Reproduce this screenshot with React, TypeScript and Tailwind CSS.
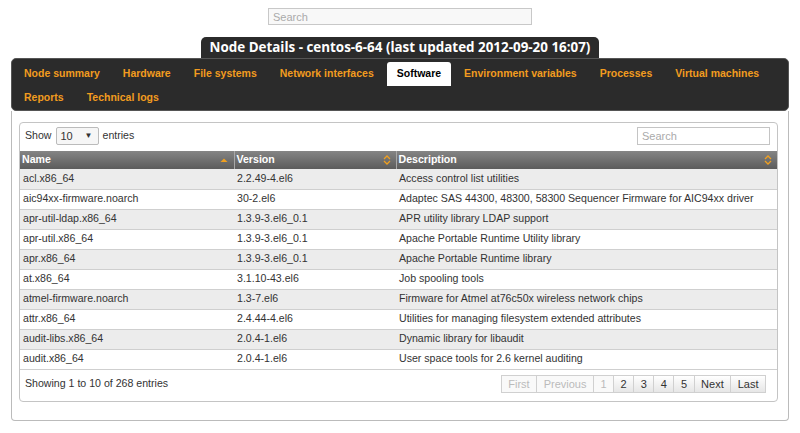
import React from 'react';

type Pkg = {
  name: string;
  version: string;
  description: string;
};

const TABS_ROW_1 = [
  'Node summary',
  'Hardware',
  'File systems',
  'Network interfaces',
  'Software',
  'Environment variables',
  'Processes',
  'Virtual machines',
];

const TABS_ROW_2 = ['Reports', 'Technical logs'];

const PACKAGES: Pkg[] = [
  { name: 'acl.x86_64', version: '2.2.49-4.el6', description: 'Access control list utilities' },
  { name: 'aic94xx-firmware.noarch', version: '30-2.el6', description: 'Adaptec SAS 44300, 48300, 58300 Sequencer Firmware for AIC94xx driver' },
  { name: 'apr-util-ldap.x86_64', version: '1.3.9-3.el6_0.1', description: 'APR utility library LDAP support' },
  { name: 'apr-util.x86_64', version: '1.3.9-3.el6_0.1', description: 'Apache Portable Runtime Utility library' },
  { name: 'apr.x86_64', version: '1.3.9-3.el6_0.1', description: 'Apache Portable Runtime library' },
  { name: 'at.x86_64', version: '3.1.10-43.el6', description: 'Job spooling tools' },
  { name: 'atmel-firmware.noarch', version: '1.3-7.el6', description: 'Firmware for Atmel at76c50x wireless network chips' },
  { name: 'attr.x86_64', version: '2.4.44-4.el6', description: 'Utilities for managing filesystem extended attributes' },
  { name: 'audit-libs.x86_64', version: '2.0.4-1.el6', description: 'Dynamic library for libaudit' },
  { name: 'audit.x86_64', version: '2.0.4-1.el6', description: 'User space tools for 2.6 kernel auditing' },
];

const SortBoth: React.FC = () => (
  <svg width="8" height="10" viewBox="0 0 8 10" className="shrink-0">
    <path d="M1 4 L4 1 L7 4" fill="none" stroke="#f0a020" strokeWidth="1.3" />
    <path d="M1 6 L4 9 L7 6" fill="none" stroke="#f0a020" strokeWidth="1.3" />
  </svg>
);

const SortAsc: React.FC = () => (
  <svg width="8" height="6" viewBox="0 0 8 6" className="shrink-0">
    <path d="M0.5 5 L4 1.5 L7.5 5 Z" fill="#f0a020" />
  </svg>
);

const Tab: React.FC<{ label: string; active?: boolean }> = ({ label, active }) => (
  <li
    className={`flex h-6 items-center rounded-t-[3px] px-[10px] text-[10.5px] font-bold ${
      active ? 'bg-white text-black' : 'text-[#f29c1f]'
    }`}
  >
    {label}
  </li>
);

const PageButton: React.FC<{ label: string; disabled?: boolean }> = ({ label, disabled }) => (
  <span
    className={`flex h-[18px] items-center border-y border-r border-[#d0d0d0] px-[6.5px] text-[11px] first:border-l ${
      disabled
        ? 'bg-[#f9f9f9] text-[#bbbbbb]'
        : 'bg-gradient-to-b from-white to-[#e6e6e6] text-[#333333]'
    }`}
  >
    {label}
  </span>
);

export default function App() {
  return (
    <div className="h-[433px] w-[800px] bg-white font-['Liberation_Sans',Arial,sans-serif] text-[#333333]">
      <div className="flex justify-center pt-2">
        <input
          type="text"
          placeholder="Search"
          className="h-[17px] w-[264px] border border-[#c8c8c8] bg-[#f8f8f8] px-1 text-[11px] placeholder:text-[#aaaaaa] focus:outline-none"
        />
      </div>

      <div className="mt-[12px] flex justify-center">
        <h1 className="rounded-t-[5px] bg-[#2b2b2b] px-[9px] pt-[1px] pb-[1px] font-['Open_Sans',sans-serif] text-[13.4px] leading-[19px] font-bold text-white">
          Node Details - centos-6-64 (last updated 2012-09-20 16:07)
        </h1>
      </div>

      <div className="mx-[11px]">
        <ul className="flex flex-wrap gap-x-[3px] rounded-[5px] border border-[#555555] bg-[#2b2b2b] px-[2px] pt-[3px]">
          {TABS_ROW_1.map((t) => (
            <Tab key={t} label={t} active={t === 'Software'} />
          ))}
          <li className="basis-full" />
          {TABS_ROW_2.map((t) => (
            <Tab key={t} label={t} />
          ))}
        </ul>

        <div className="h-[310px] rounded-b-[4px] border-x border-b border-[#bbbbbb] pt-[11px] pr-[10px] pl-[7px]">
          <div className="rounded-[4px] border border-[#c4c4c4] text-[10.6px]">
            <div className="flex h-[28px] items-center justify-between pr-[7px] pl-[5px] pb-[2px]">
              <div className="flex items-center gap-1">
                <span>Show</span>
                <span className="flex h-[18px] w-[43px] items-center justify-between rounded-[2px] border border-[#bbbbbb] bg-[#f6f6f6] pr-[5px] pl-[4px] text-[11px]">
                  10
                  <span className="text-[8px]">▼</span>
                </span>
                <span>entries</span>
              </div>
              <input
                type="text"
                placeholder="Search"
                className="h-[18px] w-[133px] border border-[#c4c4c4] bg-white px-1 text-[11px] placeholder:text-[#aaaaaa] focus:outline-none"
              />
            </div>

            <table className="w-full border-collapse text-[10.6px]">
              <thead>
                <tr className="h-[18px] bg-gradient-to-b from-[#858585] to-[#5c5c5c] text-left text-white">
                  <th className="w-[214px] border-r border-[#a8a8a8] px-[2px] py-0 font-bold">
                    <div className="flex items-center justify-between pr-[4px]">
                      Name <SortAsc />
                    </div>
                  </th>
                  <th className="w-[162px] border-r border-[#a8a8a8] px-[2px] py-0 font-bold">
                    <div className="flex items-center justify-between pr-[3px]">
                      Version <SortBoth />
                    </div>
                  </th>
                  <th className="px-[2px] py-0 font-bold">
                    <div className="flex items-center justify-between pr-[3px]">
                      Description <SortBoth />
                    </div>
                  </th>
                </tr>
              </thead>
              <tbody>
                {PACKAGES.map((p, i) => (
                  <tr
                    key={p.name}
                    className={`h-[20px] border-b border-[#cfcfcf] ${i % 2 === 0 ? 'bg-[#ececec]' : 'bg-white'}`}
                  >
                    <td className="px-[3px] py-0">{p.name}</td>
                    <td className="px-[3px] py-0">{p.version}</td>
                    <td className="px-[3px] py-0">{p.description}</td>
                  </tr>
                ))}
              </tbody>
            </table>

            <div className="flex h-[31px] items-center justify-between pr-[11px] pl-[5px] pb-[2px]">
              <span>Showing 1 to 10 of 268 entries</span>
              <div className="flex">
                <PageButton label="First" disabled />
                <PageButton label="Previous" disabled />
                <PageButton label="1" disabled />
                <PageButton label="2" />
                <PageButton label="3" />
                <PageButton label="4" />
                <PageButton label="5" />
                <PageButton label="Next" />
                <PageButton label="Last" />
              </div>
            </div>
          </div>
        </div>
      </div>
    </div>
  );
}
